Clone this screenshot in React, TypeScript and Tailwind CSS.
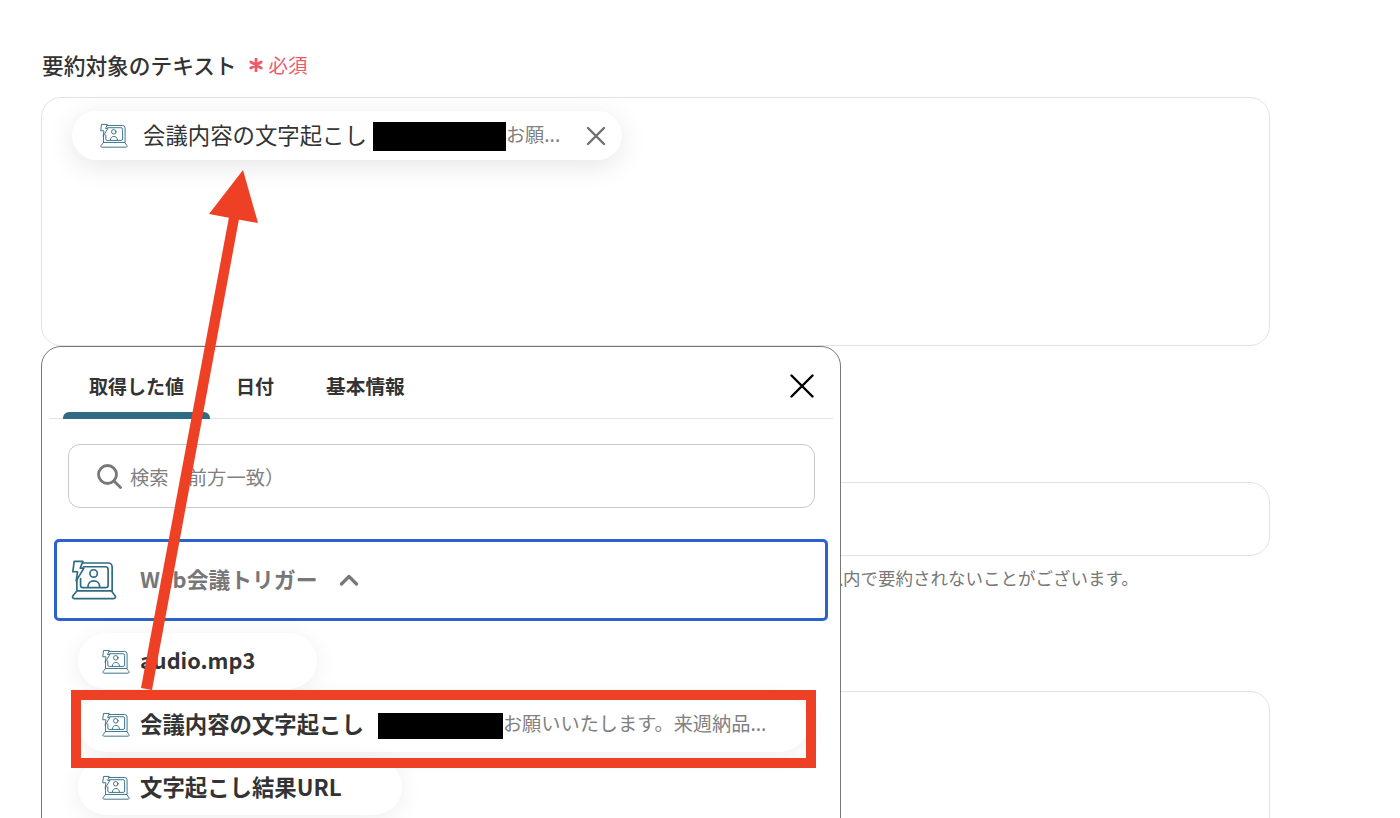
import React from "react";

const font = { fontFamily: '"Noto Sans CJK JP", "Noto Sans", sans-serif' };

function TriggerIcon({ className, thin }: { className: string; thin?: boolean }) {
  return (
    <svg viewBox="33 30 136 122" className={className} fill="none" stroke="#2f6b82" strokeWidth={thin ? 4.5 : 5} strokeLinejoin="round" strokeLinecap="round">
      <path d="M68 42H143a12 12 0 0 1 12 12V125H50V92" />
      <path d="M70 53H135a8 8 0 0 1 8 8V108a7 7 0 0 1-7 7H68a7 7 0 0 1-7-7V88" />
      <path d="M42 37H68L60 57H71L48 95L52 68H38Z" fill="#fff" />
      <path d="M50 125L38 140a5 5 0 0 0 4 8H160a5 5 0 0 0 4-8L153 125" />
      <circle cx="100" cy="73" r="11" />
      <path d="M83 113c0-24 35-24 35 0" />
    </svg>
  );
}

function Chip({ children, className }: { children: React.ReactNode; className: string }) {
  return (
    <div className={`flex h-14 items-center rounded-full bg-white pl-6 shadow-[0_4px_24px_rgba(0,0,0,0.07)] ${className}`}>
      <TriggerIcon thin className="mr-[10px] h-[25px] w-[28px] shrink-0" />
      <div className="flex items-center pb-[2px]">{children}</div>
    </div>
  );
}

export default function App() {
  return (
    <div style={font} className="relative h-[818px] w-[1400px] overflow-hidden bg-white text-[#333]">
      <main className="w-[1270px] pl-[41px] pt-[50px]">
        <div className="flex h-[32px] items-center pb-[2px] pl-px">
          <span className="text-[21.7px] font-medium leading-none">要約対象のテキスト</span>
          <svg viewBox="0 0 14 14" className="ml-[12px] h-[14px] w-[14px]" stroke="#ee5a6a" strokeWidth="2.8" strokeLinecap="round">
            <path d="M7 1V13M1.8 4L12.2 10M12.2 4L1.8 10" />
          </svg>
          <span className="ml-[6px] text-[19.5px] leading-none text-[#ee5a6a]">必須</span>
        </div>
        <section className="mt-[15px] h-[249px] rounded-[20px] border border-[#e2e2e6] pl-[30px] pt-[13px]">
          <div className="flex h-[49px] w-[550px] items-center rounded-full bg-white pl-[28px] shadow-[0_6px_28px_rgba(0,0,0,0.10)]">
            <TriggerIcon thin className="mr-[15px] h-[25px] w-[28px] shrink-0" />
            <span className="whitespace-nowrap pb-[2px] text-[22.4px] leading-none">会議内容の文字起こし</span>
            <span className="ml-[6px] mt-[2px] h-[29px] w-[133px] shrink-0 bg-black" />
            <span className="w-[70px] shrink-0 whitespace-nowrap pb-[2px] text-[19.2px] leading-none text-[#808080]">お願...</span>
            <svg viewBox="0 0 20 20" className="ml-[10px] h-5 w-5 shrink-0" stroke="#6f6f6f" strokeWidth="2.4" strokeLinecap="round">
              <path d="M2 2L18 18M18 2L2 18" />
            </svg>
          </div>
        </section>
        <div className="mt-[104px] h-[32px] text-[21.5px] font-medium">文字数</div>
        <section className="h-[74px] rounded-[20px] border border-[#e2e2e6]" />
        <p className="mt-[10px] h-[24px] whitespace-nowrap pl-[17px] text-[17.5px] leading-[24px] text-[#777]">
          出力では、※AIの処理の都合上、指定した文字数はあくまで目安であり、実際には指定した文字数以内で要約されないことがございます。
        </p>
        <section className="mt-[101px] h-[200px] rounded-[20px] border border-[#e2e2e6]" />
      </main>

      {/* selection menu over the form */}
      <div className="absolute left-[41px] top-[346px] h-[520px] w-[800px] rounded-[20px] border border-[#777] bg-white px-[7px]">
        <div className="relative flex h-[72px] items-end border-b border-[#e4e4e4]">
          <div className="relative ml-[14px] flex h-full w-[147px] items-center justify-center pt-[5px]">
            <span className="text-[19px] font-bold leading-none">取得した値</span>
            <span className="absolute bottom-[-1px] left-0 h-[7px] w-full rounded-t-[6px] bg-[#2f6b82]" />
          </div>
          <div className="ml-[26px] flex h-full items-center pt-[5px]">
            <span className="text-[19px] font-bold leading-none">日付</span>
          </div>
          <div className="ml-[52px] flex h-full items-center pt-[6px]">
            <span className="text-[19.7px] font-bold leading-none">基本情報</span>
          </div>
          <svg viewBox="0 0 24 24" className="absolute right-[19px] top-[27px] h-[24px] w-[24px]" stroke="#000" strokeWidth="2.4" strokeLinecap="round">
            <path d="M1.5 1.5L22.5 22.5M22.5 1.5L1.5 22.5" />
          </svg>
        </div>
        <div className="ml-[19px] mt-[25px] flex h-[64px] w-[747px] items-center rounded-[12px] border border-[#c9c9c9] pl-[27px]">
          <svg viewBox="0 0 26 26" className="mr-[8px] h-[26px] w-[26px]" fill="none" stroke="#777" strokeWidth="2.8" strokeLinecap="round">
            <circle cx="11.5" cy="11.5" r="9" />
            <path d="M18 18L24.5 24.5" />
          </svg>
          <span className="pt-[3px] text-[19.3px] leading-none text-[#808080]">検索（前方一致）</span>
        </div>
        <div className="ml-[5px] mt-[31px] flex h-[82px] w-[774px] items-center rounded-[5px] border-[3px] border-[#2b62cc] pl-[14px]">
          <TriggerIcon className="mb-[1px] h-[41px] w-[46px] shrink-0" />
          <span className="ml-[23px] pb-[2px] text-[21.8px] font-bold leading-none text-[#777]">Web会議トリガー</span>
          <svg viewBox="0 0 20 12" className="ml-[22px] h-[12px] w-[20px]" fill="none" stroke="#777" strokeWidth="3.2" strokeLinecap="round" strokeLinejoin="round">
            <path d="M2.5 10L10 2.5L17.5 10" />
          </svg>
        </div>
        <div className="ml-[29px] mt-[12px] flex flex-col items-start gap-[7px]">
          <Chip className="w-[239px]">
            <span className="text-[21.7px] font-bold leading-none">audio.mp3</span>
          </Chip>
          <Chip className="w-[730px]">
            <span className="whitespace-nowrap text-[22.4px] font-bold leading-none">会議内容の文字起こし</span>
            <span className="ml-[14px] mt-[6px] h-[26px] w-[125px] shrink-0 bg-black" />
            <span className="whitespace-nowrap pt-[2px] text-[19.2px] leading-none text-[#808080]">お願いいたします。来週納品...</span>
          </Chip>
          <Chip className="w-[324px]">
            <span className="whitespace-nowrap text-[22.4px] font-bold leading-none">文字起こし結果URL</span>
          </Chip>
        </div>
      </div>

      {/* annotations */}
      <div className="absolute left-[71px] top-[690px] h-[78px] w-[745px] border-[10px] border-[#ee4025]" />
      <svg viewBox="0 0 1400 818" className="pointer-events-none absolute left-0 top-0 h-[818px] w-[1400px]">
        <path d="M141 688L229 217L239 219L152 690Z M243 170L258 223L209 214Z" fill="#ee4025" />
      </svg>
    </div>
  );
}
